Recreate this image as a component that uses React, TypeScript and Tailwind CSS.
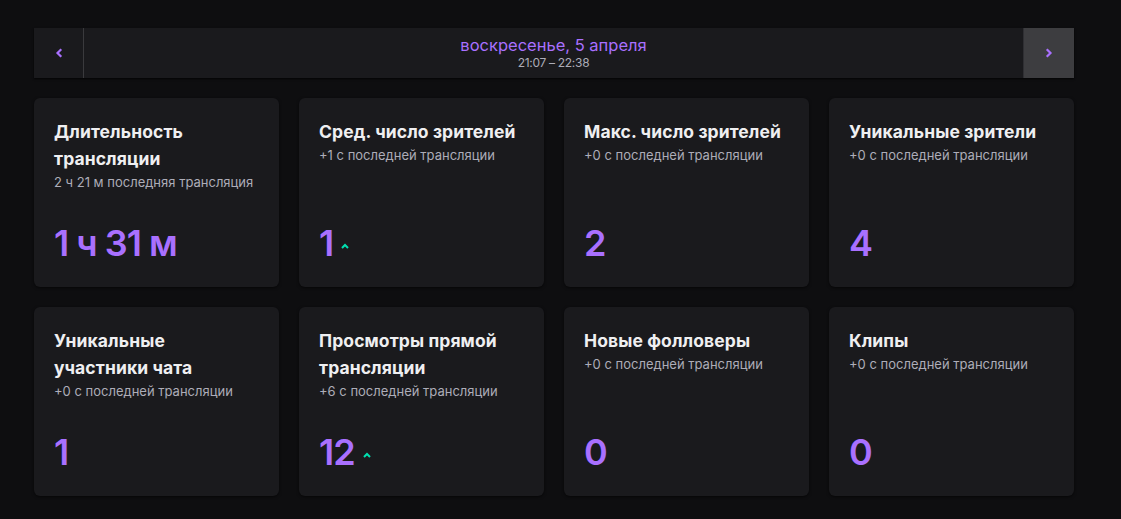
import React from "react";

interface StatProps {
  title: string;
  note: string;
  value: string;
  up?: boolean;
}

const stats: StatProps[] = [
  { title: "Длительность трансляции", note: "2 ч 21 м последняя трансляция", value: "1 ч 31 м" },
  { title: "Сред. число зрителей", note: "+1 с последней трансляции", value: "1", up: true },
  { title: "Макс. число зрителей", note: "+0 с последней трансляции", value: "2" },
  { title: "Уникальные зрители", note: "+0 с последней трансляции", value: "4" },
  { title: "Уникальные участники чата", note: "+0 с последней трансляции", value: "1" },
  { title: "Просмотры прямой трансляции", note: "+6 с последней трансляции", value: "12", up: true },
  { title: "Новые фолловеры", note: "+0 с последней трансляции", value: "0" },
  { title: "Клипы", note: "+0 с последней трансляции", value: "0" },
];

const Chevron = ({ dir }: { dir: "left" | "right" }) => (
  <svg width="8" height="10" viewBox="0 0 8 10" fill="none">
    <path
      d={dir === "left" ? "M5.5 2 L2.5 5 L5.5 8" : "M2.5 2 L5.5 5 L2.5 8"}
      stroke="#a970ff"
      strokeWidth="2.2"
      strokeLinecap="square"
    />
  </svg>
);

const StatCard = ({ title, note, value, up }: StatProps) => (
  <div className="flex h-[189px] flex-col rounded-md bg-[#1a1a1d] px-5 pt-5 pb-[22px] shadow-[0_1px_3px_rgba(0,0,0,0.6)]">
    <p className="text-[17.5px] leading-[27px] font-bold tracking-[0.1px] text-[#efeff1]">{title}</p>
    <p className="text-[13px] leading-5 text-[#adadb8]">{note}</p>
    <div className="mt-auto flex items-center">
      <span className="text-[36px] leading-[44px] font-semibold tracking-[-1px] text-[#a970ff]">{value}</span>
      {up && (
        <svg width="12" height="8" viewBox="0 0 12 8" fill="none" className="ml-[6px] mt-[6px]">
          <path d="M3 6 L6 3 L9 6" stroke="#00e0b0" strokeWidth="2" />
        </svg>
      )}
    </div>
  </div>
);

export default function App() {
  return (
    <div className="min-h-[519px] bg-[#0e0e10] px-[34px] pt-[28px] font-['Inter','Noto_Sans',sans-serif]">
      <div className="flex h-[50px] w-[1040px] bg-[#1a1a1d] shadow-[0_1px_2px_rgba(0,0,0,0.8)]">
        <button className="flex w-[50px] items-center justify-center border-r border-[#3a3a3d]">
          <Chevron dir="left" />
        </button>
        <div className="flex flex-1 flex-col items-center justify-center">
          <span className="text-[16.5px] leading-5 text-[#a970ff]">воскресенье, 5 апреля</span>
          <span className="text-[12px] leading-4 tracking-[-0.3px] text-[#adadb8]">21:07 – 22:38</span>
        </div>
        <button className="flex w-[51px] items-center justify-center border-l border-[#2f2f33] bg-[#3d3d40]">
          <Chevron dir="right" />
        </button>
      </div>
      <div className="mt-5 grid w-[1040px] grid-cols-4 gap-5">
        {stats.map((s) => (
          <StatCard key={s.title} {...s} />
        ))}
      </div>
    </div>
  );
}
